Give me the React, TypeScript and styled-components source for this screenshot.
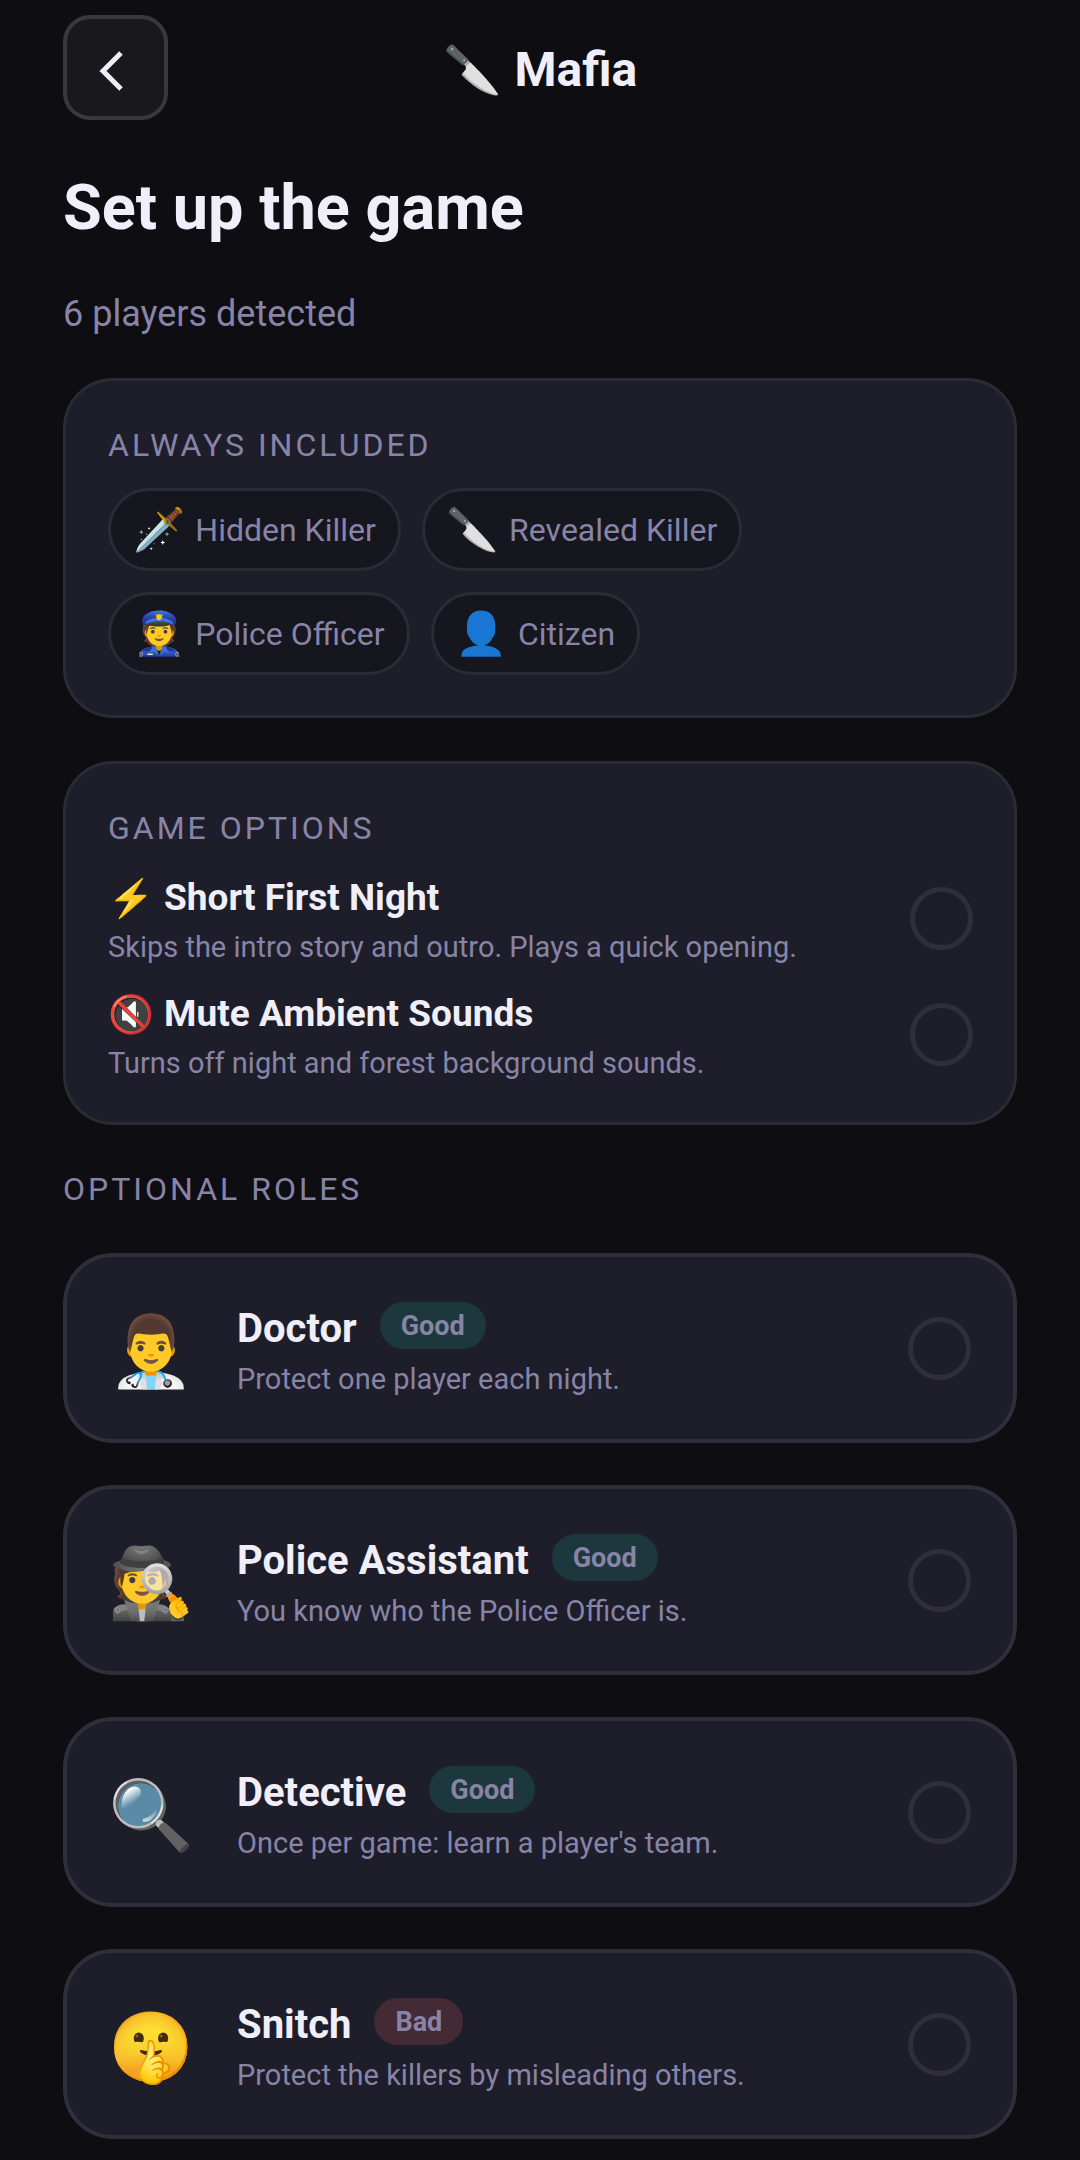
import React from "react";
import styled, { createGlobalStyle } from "styled-components";

const COLORS = {
  background: "#0d0d12",
  card: "#1e1e2a",
  chip: "#16161e",
  border: "#2b2b34",
  borderStrong: "#2f2e3a",
  text: "#f0eef8",
  muted: "#8884a8",
  good: "#1c383c",
  bad: "#432a35",
};

const GlobalStyle = createGlobalStyle`
  body {
    margin: 0;
    background-color: ${COLORS.background};
    color: ${COLORS.text};
    font-family: Roboto, "Noto Color Emoji", sans-serif;
  }
`;

const Page = styled.main`
  min-height: 100vh;
  box-sizing: border-box;
  padding: 15px 63px 21px;
`;

const Header = styled.header`
  display: grid;
  grid-template-columns: 105px 1fr 105px;
  align-items: center;
`;

const BackButton = styled.button`
  display: flex;
  align-items: center;
  justify-content: center;
  width: 105px;
  height: 105px;
  padding: 6px 10px 0 0;
  border: 4px solid #38383d;
  border-radius: 27px;
  background-color: #19191d;
  color: ${COLORS.text};
  cursor: pointer;
`;

const AppName = styled.div`
  display: flex;
  align-items: center;
  justify-content: center;
  gap: 13px;
  padding-top: 4px;
  font-size: 48px;
  line-height: 56px;
  font-weight: 700;
`;

const Title = styled.h1`
  margin: 50px 0 0;
  font-size: 63px;
  line-height: 76px;
  font-weight: 700;
`;

const Subtitle = styled.p`
  margin: 47px 0 0;
  font-size: 36px;
  line-height: 42px;
  color: ${COLORS.muted};
`;

const Card = styled.section`
  margin-top: 43px;
  padding: 42px 41px 40px 42px;
  border: 3px solid ${COLORS.border};
  border-radius: 50px;
  background-color: ${COLORS.card};
`;

const SectionLabel = styled.h2`
  margin: 0;
  font-size: 32px;
  line-height: 44px;
  font-weight: 400;
  letter-spacing: 3px;
  text-transform: uppercase;
  color: ${COLORS.muted};
`;

const ChipList = styled.ul`
  display: flex;
  flex-wrap: wrap;
  gap: 21px;
  margin: 21px 0 0;
  padding: 0;
  list-style: none;
`;

const Chip = styled.li`
  display: flex;
  align-items: center;
  gap: 10px;
  height: 77px;
  padding: 0 22px;
  border: 3px solid ${COLORS.border};
  border-radius: 42px;
  background-color: ${COLORS.chip};
  font-size: 32px;
  color: ${COLORS.muted};
`;

const Emoji = styled.span<{ $size: number }>`
  font-size: ${({ $size }) => $size}px;
  line-height: 1;
`;

const OptionRow = styled.label`
  display: flex;
  align-items: center;
  justify-content: space-between;
  height: 95px;
  margin-top: 21px;
  cursor: pointer;
`;

const OptionInfo = styled.div`
  padding-top: 5px;
`;

const OptionTitle = styled.div`
  display: flex;
  align-items: center;
  gap: 10px;
  font-size: 37px;
  line-height: 52px;
  font-weight: 700;
`;

const Description = styled.div`
  font-size: 29px;
  line-height: 46px;
  color: ${COLORS.muted};
`;

const Toggle = styled.input`
  appearance: none;
  flex: none;
  width: 63px;
  height: 63px;
  margin: 0;
  border: 5px solid ${COLORS.borderStrong};
  border-radius: 50%;
  cursor: pointer;

  &:checked {
    background-color: ${COLORS.muted};
  }
`;

const RolesHeading = styled(SectionLabel)`
  margin: 42px 0 0;
`;

const RoleCard = styled.label`
  display: flex;
  align-items: center;
  box-sizing: border-box;
  height: 190px;
  margin-top: 42px;
  padding: 0 42px;
  border: 4px solid ${COLORS.borderStrong};
  border-radius: 50px;
  background-color: ${COLORS.card};
  cursor: pointer;
`;

const RoleIcon = styled.div`
  display: flex;
  justify-content: center;
  width: 84px;
  padding-top: 6px;
`;

const RoleInfo = styled.div`
  flex: 1;
  margin-left: 44px;
  padding-top: 8px;
`;

const RoleTitle = styled.div`
  display: flex;
  align-items: flex-start;
  gap: 23px;
  font-size: 40px;
  line-height: 54px;
  font-weight: 700;
`;

const Badge = styled.span<{ $team: string }>`
  padding: 2px 21px 0;
  border-radius: 24px;
  background-color: ${({ $team }) => ($team === "Good" ? COLORS.good : COLORS.bad)};
  font-size: 27px;
  line-height: 45px;
  color: ${COLORS.muted};
`;

const alwaysIncluded = [
  { emoji: "🗡️", name: "Hidden Killer" },
  { emoji: "🔪", name: "Revealed Killer" },
  { emoji: "👮", name: "Police Officer" },
  { emoji: "👤", name: "Citizen" },
];

const gameOptions = [
  {
    emoji: "⚡",
    name: "Short First Night",
    description: "Skips the intro story and outro. Plays a quick opening.",
  },
  {
    emoji: "🔇",
    name: "Mute Ambient Sounds",
    description: "Turns off night and forest background sounds.",
  },
];

const roles = [
  { emoji: "👨‍⚕️", name: "Doctor", team: "Good", description: "Protect one player each night." },
  { emoji: "🕵️", name: "Police Assistant", team: "Good", description: "You know who the Police Officer is." },
  { emoji: "🔍", name: "Detective", team: "Good", description: "Once per game: learn a player's team." },
  { emoji: "🤫", name: "Snitch", team: "Bad", description: "Protect the killers by misleading others." },
];

const App: React.FC = () => {
  const [selected, setSelected] = React.useState<string[]>([]);

  const toggle = (name: string) => {
    setSelected(prev =>
      prev.includes(name) ? prev.filter(item => item !== name) : [...prev, name]
    );
  };

  return (
    <>
      <GlobalStyle />
      <Page>
        <Header>
          <BackButton type="button" aria-label="Back">
            <svg width="26" height="42" viewBox="0 0 26 42" fill="none" stroke="currentColor" strokeWidth="5">
              <path d="M23 3 L5 21 L23 39" />
            </svg>
          </BackButton>
          <AppName>
            <Emoji $size={47}>🔪</Emoji>
            Mafia
          </AppName>
        </Header>

        <Title>Set up the game</Title>
        <Subtitle>6 players detected</Subtitle>

        <Card>
          <SectionLabel>Always included</SectionLabel>
          <ChipList>
            {alwaysIncluded.map(role => (
              <Chip key={role.name}>
                <Emoji $size={42}>{role.emoji}</Emoji>
                {role.name}
              </Chip>
            ))}
          </ChipList>
        </Card>

        <Card>
          <SectionLabel>Game options</SectionLabel>
          {gameOptions.map(option => (
            <OptionRow key={option.name}>
              <OptionInfo>
                <OptionTitle>
                  <Emoji $size={37}>{option.emoji}</Emoji>
                  {option.name}
                </OptionTitle>
                <Description>{option.description}</Description>
              </OptionInfo>
              <Toggle
                type="checkbox"
                checked={selected.includes(option.name)}
                onChange={() => toggle(option.name)}
              />
            </OptionRow>
          ))}
        </Card>

        <RolesHeading>Optional roles</RolesHeading>
        {roles.map(role => (
          <RoleCard key={role.name}>
            <RoleIcon>
              <Emoji $size={69}>{role.emoji}</Emoji>
            </RoleIcon>
            <RoleInfo>
              <RoleTitle>
                {role.name}
                <Badge $team={role.team}>{role.team}</Badge>
              </RoleTitle>
              <Description>{role.description}</Description>
            </RoleInfo>
            <Toggle
              type="checkbox"
              checked={selected.includes(role.name)}
              onChange={() => toggle(role.name)}
            />
          </RoleCard>
        ))}
      </Page>
    </>
  );
};

export default App;
